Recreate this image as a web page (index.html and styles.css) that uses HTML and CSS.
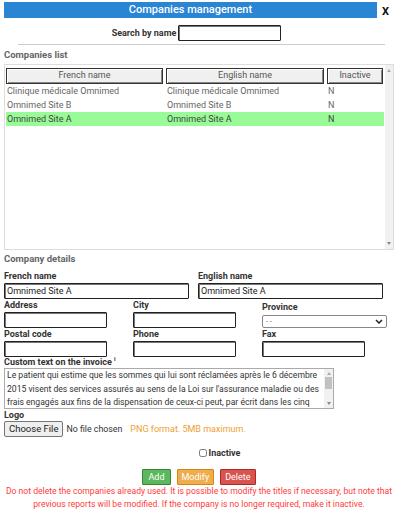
FILE: index.html
```html
<!DOCTYPE html>
<html lang="en">
<head>
    <meta charset="UTF-8">
    <title>Companies management</title>
    <link rel="stylesheet" href="styles.css">
</head>
<body>
    <div class="page">
        <div class="titlebar">
            <div class="title">Companies management</div>
            <div class="close">X</div>
        </div>

        <div class="search">
            <label for="search">Search by name</label>
            <input type="text" id="search" class="field search-field">
        </div>
        <div class="divider"></div>

        <div class="section-title">Companies list</div>
        <div class="list">
            <div class="list-body">
                <div class="list-head">
                    <div class="head-cell">French name</div>
                    <div class="head-cell">English name</div>
                    <div class="head-cell">Inactive</div>
                </div>
                <div class="list-row">
                    <div>Clinique médicale Omnimed</div>
                    <div>Clinique médicale Omnimed</div>
                    <div>N</div>
                </div>
                <div class="list-row">
                    <div>Omnimed Site B</div>
                    <div>Omnimed Site B</div>
                    <div>N</div>
                </div>
                <div class="list-row selected">
                    <div>Omnimed Site A</div>
                    <div>Omnimed Site A</div>
                    <div>N</div>
                </div>
            </div>
            <div class="scrollbar">
                <span class="arrow up"></span>
                <span class="arrow down"></span>
            </div>
        </div>

        <div class="section-title details-title">Company details</div>
        <div class="row two">
            <div class="group">
                <label>French name</label>
                <input type="text" class="field" value="Omnimed Site A">
            </div>
            <div class="group">
                <label>English name</label>
                <input type="text" class="field" value="Omnimed Site A">
            </div>
        </div>
        <div class="row three">
            <div class="group">
                <label>Address</label>
                <input type="text" class="field short">
            </div>
            <div class="group">
                <label>City</label>
                <input type="text" class="field short">
            </div>
            <div class="group">
                <label class="province-label">Province</label>
                <div class="select">
                    <span>- -</span>
                    <svg width="8" height="5" viewBox="0 0 8 5"><path d="M1 1 L4 4 L7 1" fill="none" stroke="#222" stroke-width="1.5"/></svg>
                </div>
            </div>
        </div>
        <div class="row three">
            <div class="group">
                <label>Postal code</label>
                <input type="text" class="field short">
            </div>
            <div class="group">
                <label>Phone</label>
                <input type="text" class="field short">
            </div>
            <div class="group">
                <label>Fax</label>
                <input type="text" class="field short">
            </div>
        </div>

        <div class="group">
            <label class="custom-label">Custom text on the invoice <sup>i</sup></label>
            <div class="textarea">
                <div class="textarea-text">Le patient qui estime que les sommes qui lui sont réclamées après le 6 décembre 2015 visent des services assurés au sens de la Loi sur l'assurance maladie ou des frais engagés aux fins de la dispensation de ceux-ci peut, par écrit dans les cinq</div>
                <div class="scrollbar small">
                    <span class="arrow up"></span>
                    <span class="thumb"></span>
                    <span class="arrow down"></span>
                </div>
            </div>
        </div>

        <div class="group">
            <label class="logo-label">Logo</label>
            <div class="file-row">
                <button class="file-btn">Choose File</button>
                <span class="file-name">No file chosen</span>
                <span class="file-hint">PNG format. 5MB maximum.</span>
            </div>
        </div>

        <div class="inactive">
            <input type="checkbox" id="inactive">
            <label for="inactive">Inactive</label>
        </div>

        <div class="actions">
            <button class="btn add">Add</button>
            <button class="btn modify">Modify</button>
            <button class="btn delete">Delete</button>
        </div>
        <p class="warning">Do not delete the companies already used. It is possible to modify the titles if necessary, but note that previous reports will be modified. If the company is no longer required, make it inactive.</p>
    </div>
</body>
</html>
```

FILE: styles.css
```css
body {
    margin: 0;
    font-family: Roboto, "Liberation Sans", sans-serif;
    font-size: 9px;
    color: #333;
    background-color: #fff;
}
.page {
    padding: 2px 4px 0 4px;
}
.titlebar {
    display: flex;
    align-items: flex-start;
}
.title {
    flex: 1;
    background-color: #2a85d4;
    color: #fff;
    text-align: center;
    font-size: 11px;
    font-weight: 500;
    height: 16px;
    line-height: 16px;
}
.close {
    width: 17px;
    text-align: center;
    font-size: 11px;
    font-weight: bold;
    color: #111;
    padding-top: 3px;
}
.search {
    display: flex;
    justify-content: center;
    align-items: center;
    gap: 2px;
    margin-top: 7px;
    padding-right: 5px;
}
.search label {
    font-weight: bold;
    color: #333;
}
.field {
    box-sizing: border-box;
    height: 16px;
    border: 1px solid #222;
    border-radius: 1px;
    box-shadow: inset 1px 1px 0 #777;
    font-family: inherit;
    font-size: 9px;
    padding: 0 2px;
    color: #222;
    margin: 0;
}
.search-field {
    width: 103px;
}
.divider {
    height: 1px;
    background-color: #ccc;
    margin: 3px 9px 0 14px;
}
.section-title {
    font-weight: bold;
    font-size: 9.5px;
    color: #666;
    margin-top: 3px;
    height: 14px;
    line-height: 14px;
}
.list {
    display: flex;
    height: 184px;
    border: 1px solid #ddd;
    margin-top: 2px;
}
.list-body {
    flex: 1;
    padding: 3px 1px 0 1px;
}
.list-head, .list-row {
    display: grid;
    grid-template-columns: 157px 158px 56px;
    column-gap: 3px;
}
.head-cell {
    box-sizing: border-box;
    height: 16px;
    line-height: 13px;
    text-align: center;
    color: #555;
    background-color: #f0f0f0;
    border: 1px solid #333;
    box-shadow: inset 1px 1px 0 #fff, inset -1px -1px 0 #888;
}
.list-row {
    height: 14px;
    line-height: 14px;
    color: #666;
    padding-left: 1px;
}
.list-row div {
    white-space: nowrap;
}
.list-row.selected {
    background-color: #98fb98;
    color: #444;
}
.scrollbar {
    width: 9px;
    background-color: #f1f1f1;
    display: flex;
    flex-direction: column;
    justify-content: space-between;
    align-items: center;
    padding: 4px 0;
}
.arrow {
    width: 0;
    height: 0;
    border-left: 2px solid transparent;
    border-right: 2px solid transparent;
}
.arrow.up {
    border-bottom: 3px solid #aaa;
}
.arrow.down {
    border-top: 3px solid #888;
}
.details-title {
    margin-top: 2px;
    margin-bottom: 4px;
}
.row {
    display: grid;
}
.row.two {
    grid-template-columns: 194px 185px;
}
.row.three {
    grid-template-columns: 129px 129px 125px;
}
.group {
    display: flex;
    flex-direction: column;
}
.group label {
    font-weight: bold;
    color: #333;
    height: 13px;
    line-height: 13px;
}
.row.two .field {
    width: 185px;
}
.field.short {
    width: 103px;
}
.province-label {
    margin-top: 2px;
    margin-bottom: 1px;
}
.select {
    box-sizing: border-box;
    width: 125px;
    height: 13px;
    border: 1px solid #888;
    border-radius: 2px;
    display: flex;
    justify-content: space-between;
    align-items: center;
    padding: 0 3px;
    font-size: 7px;
    color: #555;
}
sup {
    font-size: 6px;
    line-height: 0;
}
.group .custom-label {
    height: 11px;
    line-height: 11px;
}
.textarea {
    display: flex;
    width: 330px;
    height: 41px;
    box-sizing: border-box;
    border: 1px solid #aaa;
}
.textarea-text {
    flex: 1;
    padding: 0 2px;
    line-height: 13.5px;
    font-size: 8.6px;
    color: #333;
    overflow: hidden;
}
.scrollbar.small {
    justify-content: flex-start;
    padding: 3px 0;
    gap: 2px;
}
.scrollbar.small .arrow.down {
    margin-top: auto;
}
.thumb {
    width: 7px;
    height: 12px;
    background-color: #c1c1c1;
}
.group .logo-label {
    height: 12px;
    line-height: 12px;
}
.file-row {
    display: flex;
    align-items: center;
    gap: 3px;
}
.file-btn {
    font-family: inherit;
    font-size: 9.5px;
    color: #222;
    background-color: #efefef;
    border: 1px solid #767676;
    border-radius: 2px;
    height: 16px;
    padding: 0 4px;
    line-height: 14px;
}
.file-name {
    font-size: 8.8px;
    color: #333;
}
.file-hint {
    color: #f0a030;
    margin-left: 5px;
}
.inactive {
    display: flex;
    align-items: center;
    justify-content: center;
    margin-top: 10px;
    margin-left: 41px;
    font-weight: bold;
    height: 12px;
}
.inactive input {
    margin: 0 2px 0 0;
    width: 8px;
    height: 8px;
}
.actions {
    display: flex;
    justify-content: center;
    gap: 6px;
    margin-top: 10px;
}
.btn {
    font-family: inherit;
    font-size: 9px;
    color: #fff;
    height: 16px;
    padding: 0 4px;
    border: 1px solid;
    border-radius: 1px;
}
.add {
    background-color: #5cb85c;
    border-color: #398439;
    padding: 0 5px;
}
.modify {
    background-color: #f0ad4e;
    border-color: #d58512;
}
.delete {
    background-color: #d9534f;
    border-color: #ac2925;
}
.warning {
    margin: 0 -3px;
    color: #ff3b3b;
    font-size: 8.6px;
    text-align: center;
    line-height: 13px;
}
```
